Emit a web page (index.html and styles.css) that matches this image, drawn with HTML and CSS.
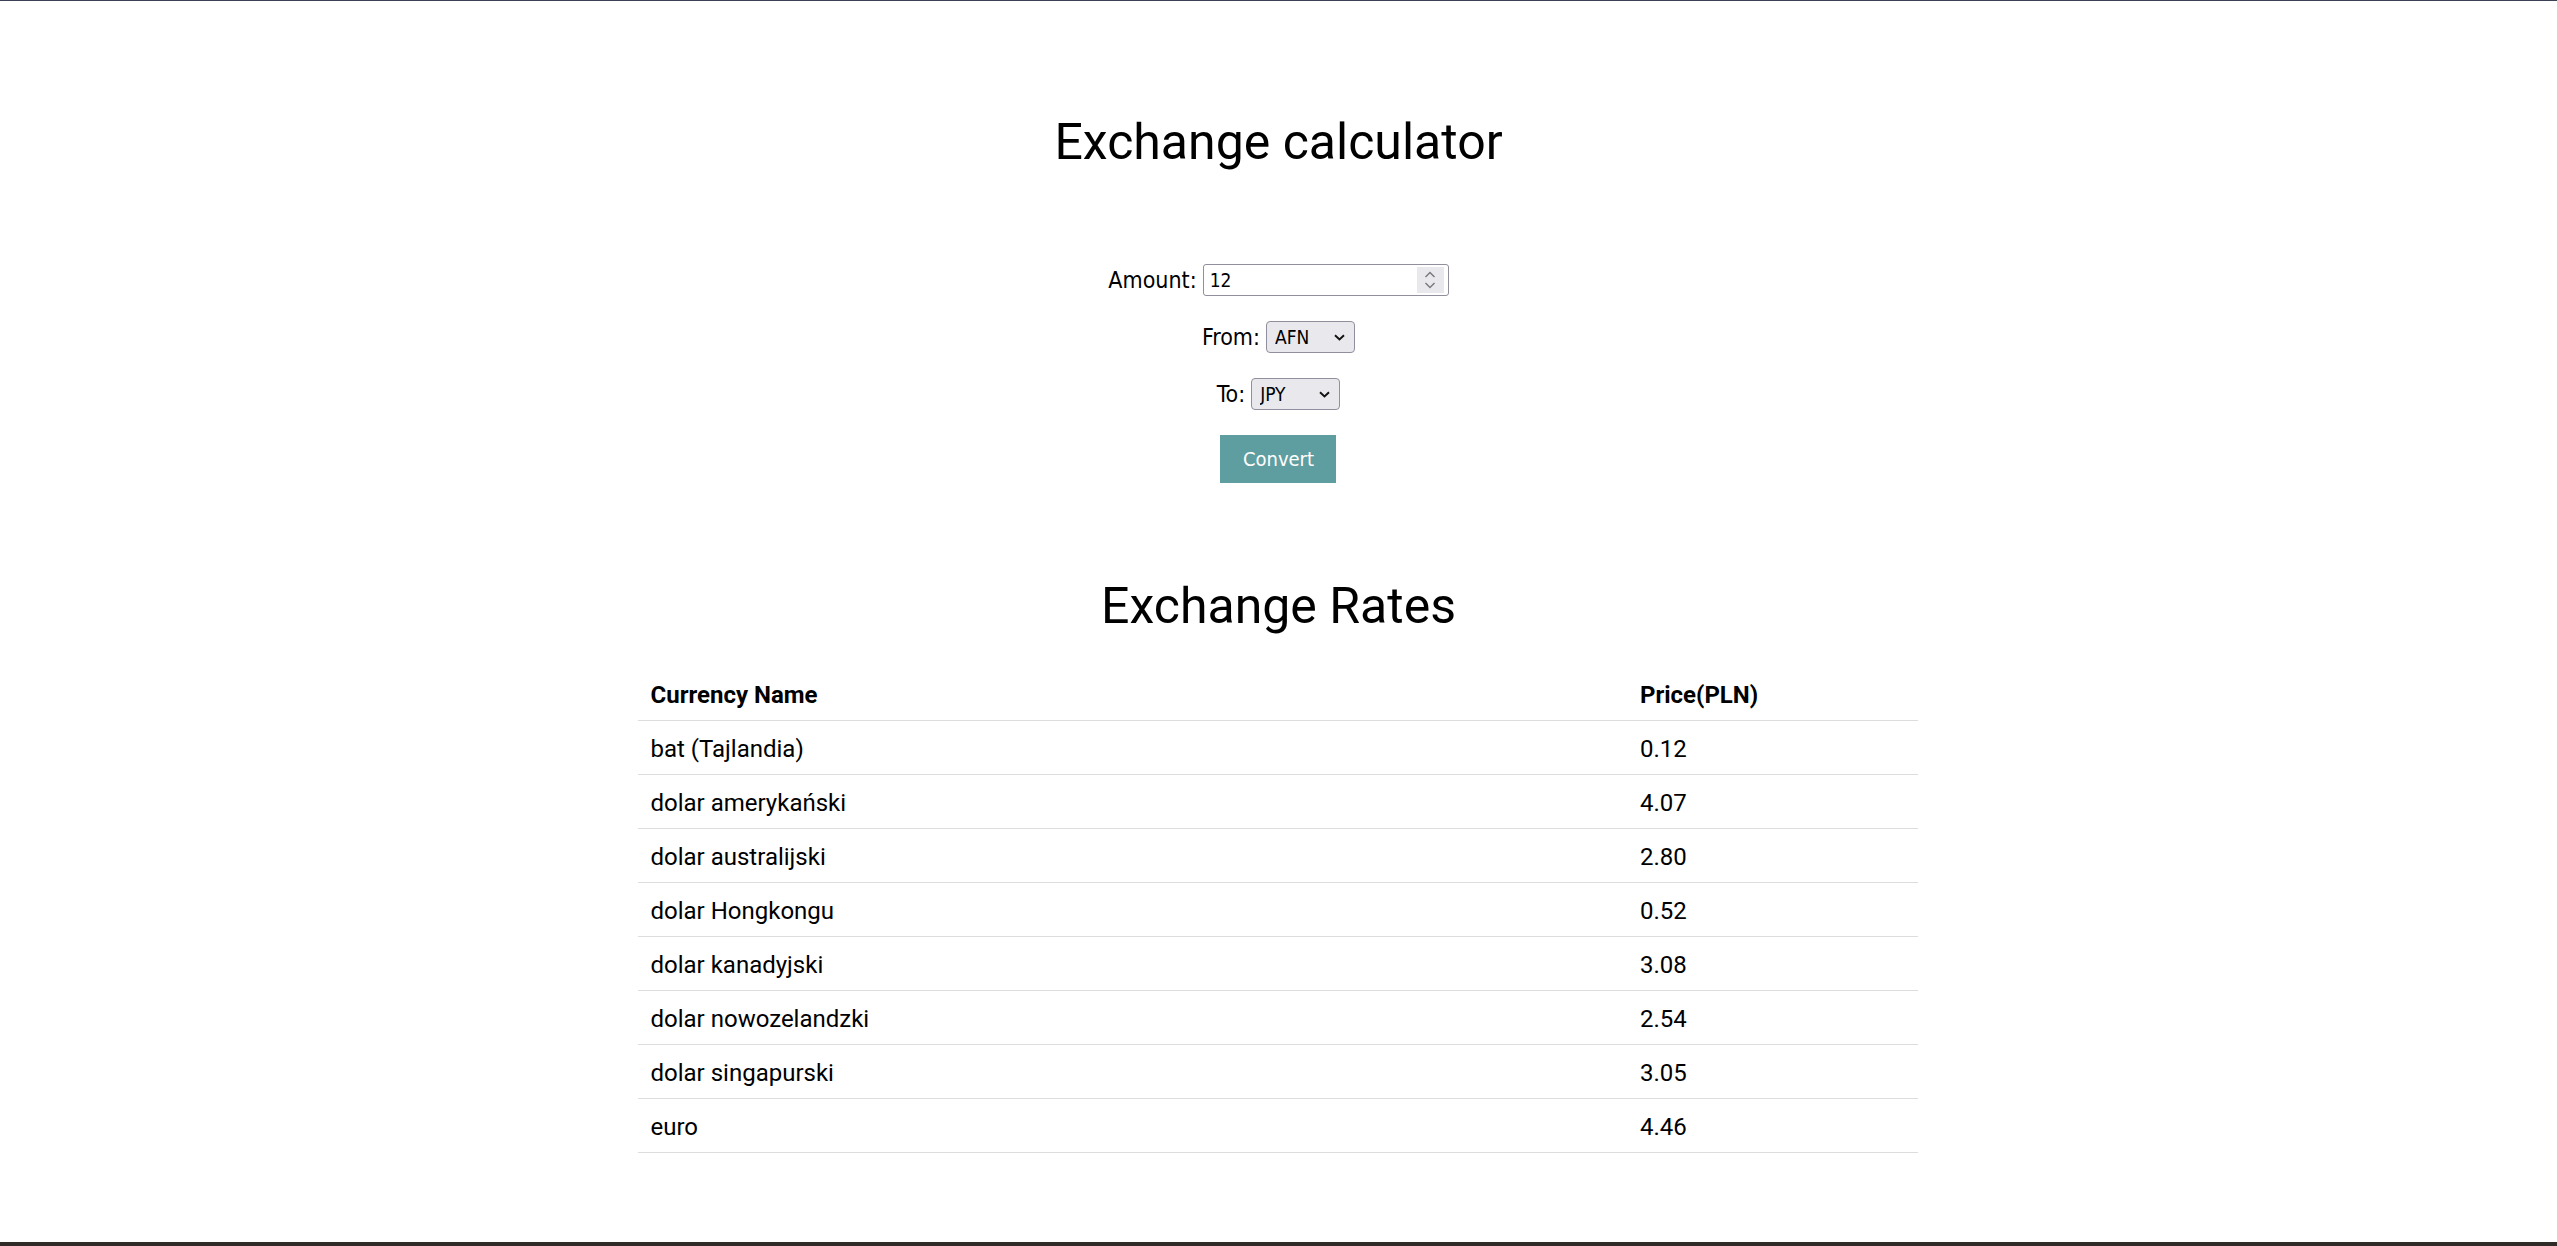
FILE: index.html
```html
<!DOCTYPE html>
<html lang="en">
<head>
<meta charset="utf-8">
<title>Exchange calculator</title>
<link rel="stylesheet" href="styles.css">
</head>
<body>
<div class="topline"></div>
<main class="page">
  <h1 class="title">Exchange calculator</h1>
  <form class="calc">
    <div class="row">
      <label for="amount">Amount:</label>
      <div class="num">
        <input id="amount" type="text" value="12">
        <span class="spin">
          <svg width="12" height="22" viewBox="0 0 12 22"><path d="M1.5 8 L6 3.5 L10.5 8" fill="none" stroke="#7a7a80" stroke-width="1.5"/><path d="M1.5 14 L6 18.5 L10.5 14" fill="none" stroke="#7a7a80" stroke-width="1.5"/></svg>
        </span>
      </div>
    </div>
    <div class="row">
      <label for="from">From:</label>
      <div class="sel">
        <select id="from"><option>AFN</option></select>
        <svg class="chev" width="11" height="7" viewBox="0 0 11 7"><path d="M1 1.2 L5.5 5.5 L10 1.2" fill="none" stroke="#111" stroke-width="1.9"/></svg>
      </div>
    </div>
    <div class="row">
      <label for="to">To:</label>
      <div class="sel">
        <select id="to"><option>JPY</option></select>
        <svg class="chev" width="11" height="7" viewBox="0 0 11 7"><path d="M1 1.2 L5.5 5.5 L10 1.2" fill="none" stroke="#111" stroke-width="1.9"/></svg>
      </div>
    </div>
    <button type="button" class="btn">Convert</button>
  </form>

  <h2 class="title rates-title">Exchange Rates</h2>
  <table class="rates">
    <thead>
      <tr><th class="c-name">Currency Name</th><th>Price(PLN)</th></tr>
    </thead>
    <tbody>
      <tr><td>bat (Tajlandia)</td><td>0.12</td></tr>
      <tr><td>dolar amerykański</td><td>4.07</td></tr>
      <tr><td>dolar australijski</td><td>2.80</td></tr>
      <tr><td>dolar Hongkongu</td><td>0.52</td></tr>
      <tr><td>dolar kanadyjski</td><td>3.08</td></tr>
      <tr><td>dolar nowozelandzki</td><td>2.54</td></tr>
      <tr><td>dolar singapurski</td><td>3.05</td></tr>
      <tr><td>euro</td><td>4.46</td></tr>
    </tbody>
  </table>
</main>
<div class="bottombar"></div>
</body>
</html>
```

FILE: styles.css
```css
html, body {
  margin: 0;
  padding: 0;
  background: #fff;
}
body {
  min-height: 100vh;
  display: flex;
  flex-direction: column;
  font-family: Roboto, "Liberation Sans", sans-serif;
  color: #000;
}
.topline {
  height: 1px;
  background: #3c4055;
  flex: none;
}
.page {
  display: flex;
  flex-direction: column;
  align-items: center;
  padding-top: 112px;
}
.title {
  margin: 0;
  font-family: Roboto, sans-serif;
  font-weight: 400;
  font-size: 50px;
  line-height: 58px;
}
.calc {
  margin-top: 93px;
  display: flex;
  flex-direction: column;
  align-items: center;
  gap: 25px;
}
.row {
  display: flex;
  align-items: center;
  gap: 6px;
  height: 32px;
}
.row label {
  font-family: "DejaVu Sans Condensed", "DejaVu Sans", sans-serif;
  font-stretch: condensed;
  font-size: 23px;
  color: #000;
}
.num {
  display: flex;
  align-items: center;
  width: 246px;
  height: 32px;
  box-sizing: border-box;
  border: 1px solid #8f8f9d;
  border-radius: 3px;
  padding: 0 4px 0 6px;
  background: #fff;
}
.num input {
  flex: 1;
  min-width: 0;
  border: none;
  outline: none;
  padding: 0;
  background: transparent;
  font-family: "DejaVu Sans Condensed", "DejaVu Sans", sans-serif;
  font-stretch: condensed;
  font-size: 19px;
  color: #000;
}
.spin {
  width: 27px;
  height: 26px;
  background: #e9e9ed;
  display: flex;
  align-items: center;
  justify-content: center;
}
.sel {
  position: relative;
  display: flex;
}
.sel select {
  appearance: none;
  -webkit-appearance: none;
  width: 89px;
  height: 32px;
  box-sizing: border-box;
  border: 1px solid #8f8f9d;
  border-radius: 4px;
  background: #e9e9ed;
  padding: 0 0 0 8px;
  margin: 0;
  font-family: "DejaVu Sans Condensed", "DejaVu Sans", sans-serif;
  font-stretch: condensed;
  font-size: 19px;
  color: #000;
}
.chev {
  position: absolute;
  right: 10px;
  top: 13px;
  pointer-events: none;
}
.btn {
  width: 116px;
  height: 48px;
  border: none;
  background: #5f9ea0;
  color: #fff;
  font-family: "DejaVu Sans Condensed", "DejaVu Sans", sans-serif;
  font-stretch: condensed;
  font-size: 20px;
  padding: 0;
  margin: 0;
}
.rates-title {
  margin-top: 94px;
}
.rates {
  margin-top: 32px;
  width: 1280px;
  position: relative;
  left: -1px;
  border-collapse: collapse;
  font-family: Roboto, sans-serif;
  font-size: 24px;
}
.rates th, .rates td {
  text-align: left;
  padding: 14px 12px 11px 13px;
  line-height: 28px;
  border-bottom: 1px solid #dddddd;
}
.rates th {
  font-weight: 700;
}
.rates .c-name {
  width: 77.3%;
}
.bottombar {
  margin-top: auto;
  height: 4px;
  background: #2f2b27;
  flex: none;
}
```
